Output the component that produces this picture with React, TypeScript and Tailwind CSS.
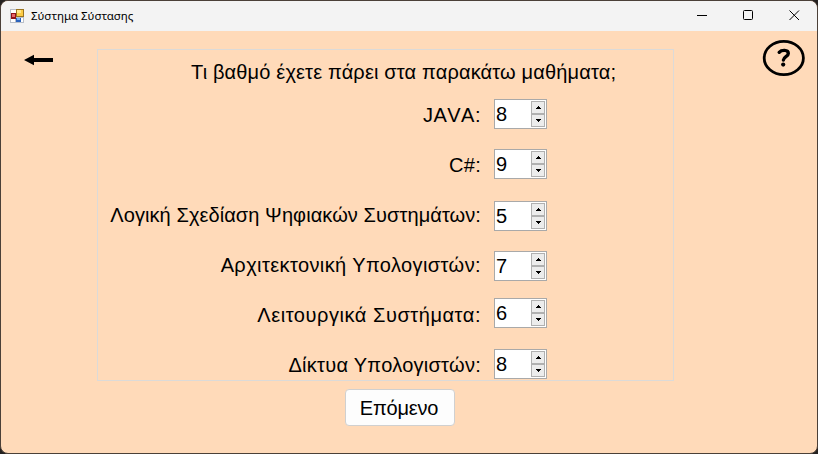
const courses = [
  { name: 'JAVA:', grade: 8, text: 'tracking-[0.5px] [font-kerning:none]', box: 'mt-[9px]' },
  { name: 'C#:', grade: 9, text: 'tracking-[0.3px]', box: 'mt-[9px]' },
  { name: 'Λογική Σχεδίαση Ψηφιακών Συστημάτων:', grade: 5, text: 'tracking-[0.08px]', box: 'mt-[11px]' },
  { name: 'Αρχιτεκτονική Υπολογιστών:', grade: 7, text: 'tracking-[0.4px]', box: 'mt-[11px]' },
  { name: 'Λειτουργικά Συστήματα:', grade: 6, text: 'tracking-[0.55px]', box: 'mt-[8px]' },
  { name: 'Δίκτυα Υπολογιστών:', grade: 8, text: 'tracking-[0.27px]', box: 'mt-[9px]' },
];

function AppIcon() {
  return (
    <svg width="14" height="14" viewBox="0 0 14 14" shapeRendering="crispEdges">
      <rect x="0" y="0" width="14" height="14" fill="#b9bfc9" />
      <rect x="1" y="1" width="5" height="3" fill="#fff" />
      <rect x="1" y="10" width="4" height="3" fill="#fff" />
      <rect x="11" y="9" width="2" height="4" fill="#fff" />
      <rect x="6" y="0" width="8" height="8" fill="#9a7420" />
      <rect x="7" y="1" width="6" height="6" fill="#fbcb45" />
      <rect x="7" y="1" width="4" height="3" fill="#ffe68c" />
      <rect x="1" y="4" width="5" height="6" fill="#8e1118" />
      <rect x="2" y="5" width="3" height="3" fill="#e5646a" />
      <rect x="6" y="9" width="5" height="4" fill="#2b63bd" />
      <rect x="7" y="9" width="3" height="2" fill="#7cb0f0" />
    </svg>
  );
}

function Spinner({ value, className }: { value: number; className: string }) {
  return (
    <div className={`flex h-[30px] w-[53px] justify-between border border-[#a9a9a9] bg-white pt-px pr-px ${className}`}>
      <span className="ml-px h-[26px] origin-center scale-y-105 text-[20px] leading-[26px]">{value}</span>
      <div className="flex w-[14px] flex-col">
        <div className="flex h-[13px] items-center justify-center border border-[#b0b0b0] bg-[#ececec]">
          <svg width="5" height="3" viewBox="0 0 5 3"><path d="M2 0h1v1h1v1h1v1H0V2h1V1h1z" /></svg>
        </div>
        <div className="flex h-[13px] items-center justify-center border border-[#b0b0b0] bg-[#ececec]">
          <svg width="5" height="3" viewBox="0 0 5 3"><path d="M0 0h5v1H4v1H3v1H2V2H1V1H0z" /></svg>
        </div>
      </div>
    </div>
  );
}

export default function App() {
  return (
    <div className="h-[454px] w-[818px] overflow-hidden bg-[#242120] font-['Liberation_Sans',Arial,sans-serif] text-black">
      <div className="flex h-[454px] flex-col overflow-hidden rounded-lg border border-[#4b4038] bg-[#ffdab9]">
        <header className="flex h-[30px] shrink-0 items-center bg-[#f3f3f3] pl-[9px]">
          <AppIcon />
          <span className="ml-[7px] font-['Noto_Sans','Open_Sans',sans-serif] text-[11.5px] tracking-[-0.04px]">Σύστημα Σύστασης</span>
          <div className="ml-auto mr-[17px] -mt-px flex items-center gap-[35px]">
            <svg width="11" height="11"><path d="M0 5.5h10" stroke="#000" /></svg>
            <svg width="11" height="11"><rect x=".5" y=".5" width="9" height="9" rx="1" fill="none" stroke="#000" /></svg>
            <svg width="11" height="11"><path d="M.5.5l9.5 9.5M10 .5L.5 10" stroke="#000" /></svg>
          </div>
        </header>
        <main className="flex items-start">
          <div className="w-[96px] shrink-0 pl-[23px] pt-[23px]">
            <svg width="30" height="12" viewBox="0 0 30 12"><path d="M0 6L10 .8V4H29V8H10V11.2Z" /></svg>
          </div>
          <div className="flex w-[577px] shrink-0 flex-col items-start pt-[18px]">
            <section className="h-[332px] w-full border border-[#dcdad8]">
              <h1 className="flex h-[40px] items-center pl-[93px] pt-[4px] text-[20px] leading-[24px] tracking-[0.16px] whitespace-nowrap">Τι βαθμό έχετε πάρει στα παρακάτω μαθήματα;</h1>
              {courses.map((course) => (
                <div key={course.name} className="flex h-[50px] items-start">
                  <label className={`w-[383px] shrink-0 pt-[13px] text-right text-[20px] leading-[24px] whitespace-nowrap ${course.text}`}>{course.name}</label>
                  <Spinner value={course.grade} className={`ml-[13px] ${course.box}`} />
                </div>
              ))}
            </section>
            <button className="mt-[8px] ml-[248px] h-[37px] w-[110px] rounded-[4px] border border-[#d0d0d0] bg-[#fdfdfd] pr-[2px] text-[20px] leading-[24px] tracking-[-0.2px]">Επόμενο</button>
          </div>
          <div className="pl-[88px] pt-[8px]">
            <svg width="44" height="38" viewBox="0 0 44 38" fill="none" stroke="#000">
              <ellipse cx="21.8" cy="19" rx="19.6" ry="16.7" strokeWidth="2.8" />
              <path d="M17.2 13.3C19.5 10.8 26.3 10.4 26.3 14.4C26.3 17.6 21.6 17.6 21.4 21" strokeWidth="3.4" strokeLinecap="round" />
              <circle cx="21.2" cy="25.6" r="2.1" fill="#000" stroke="none" />
            </svg>
          </div>
        </main>
      </div>
    </div>
  );
}
